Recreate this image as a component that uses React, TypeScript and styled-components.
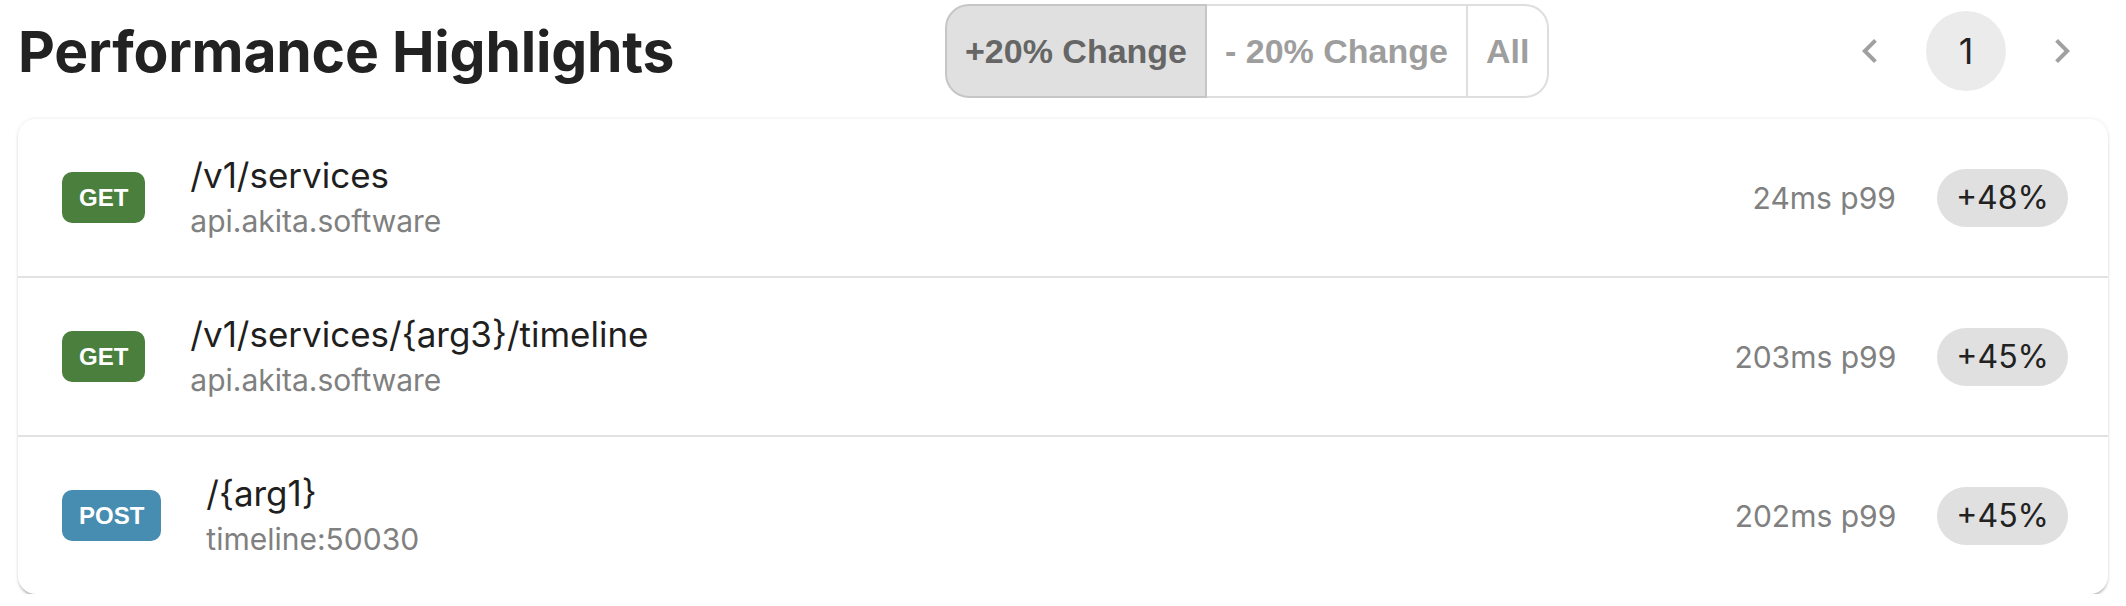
import React from 'react'
import styled, { createGlobalStyle } from 'styled-components'

const GlobalStyle = createGlobalStyle`
  body {
    margin: 0;
    background: #ffffff;
    font-family: Inter, "Noto Sans", sans-serif;
  }
`

const Page = styled.div`
  padding: 0 18px;
`

// Title | filter toggle | pager
const Header = styled.div`
  align-items: center;
  display: grid;
  grid-template-columns: 927px auto 1fr;
  height: 102px;
  margin-bottom: 17px;
`

const Title = styled.h1`
  color: #222222;
  font-size: 57px;
  font-weight: 700;
  letter-spacing: -0.2px;
  margin: 0 0 0 0;
`

const Toggle = styled.div`
  display: flex;
  height: 94px;
`

const ToggleButton = styled.button<{ $selected?: boolean }>`
  background: ${({ $selected }) => ($selected ? '#e0e0e0' : '#ffffff')};
  border: 2px solid ${({ $selected }) => ($selected ? '#c6c6c6' : '#dedede')};
  color: ${({ $selected }) => ($selected ? '#666666' : '#9e9e9e')};
  cursor: pointer;
  font-family: "Liberation Sans", Arial, sans-serif;
  font-size: 34px;
  font-weight: 700;
  padding: 0 18px;

  & + & {
    border-left: none;
  }

  &:first-child {
    border-radius: 24px 0 0 24px;
  }

  &:last-child {
    border-radius: 0 24px 24px 0;
  }
`

const Pager = styled.div`
  align-items: center;
  display: flex;
  gap: 16px;
  justify-self: end;
  margin-right: 6px;
`

const PagerArrow = styled.button`
  align-items: center;
  background: none;
  border: none;
  color: #a0a0a0;
  display: flex;
  height: 80px;
  justify-content: center;
  padding: 0;
  width: 80px;
`

const PagerNumber = styled.button`
  background: #ebebeb;
  border: none;
  border-radius: 50%;
  color: #222222;
  font-family: Inter, sans-serif;
  font-size: 36px;
  height: 80px;
  padding: 0;
  width: 80px;
`

const Card = styled.div`
  background: #ffffff;
  border-radius: 18px;
  box-shadow: 0 3px 3px -1px rgba(0, 0, 0, 0.28), 0 0 4px rgba(0, 0, 0, 0.09);
  overflow: hidden;
`

const Row = styled.div`
  align-items: center;
  display: flex;
  height: 157px;
  padding: 0 40px 0 44px;

  & + & {
    border-top: 2px solid #e2e2e2;
  }
`

const methodColours: Record<string, string> = {
  GET: '#4b7f3d',
  POST: '#478db1',
}

const MethodBadge = styled.span<{ $method: string }>`
  align-items: center;
  background: ${({ $method }) => methodColours[$method]};
  border-radius: 10px;
  color: #ffffff;
  display: flex;
  font-family: "Liberation Sans", Arial, sans-serif;
  font-size: 24px;
  font-weight: 700;
  height: 51px;
  padding: 0 17px;
`

const Endpoint = styled.div`
  flex: 1;
  margin-left: 45px;
`

const EndpointPath = styled.div`
  color: #1f1f1f;
  font-size: 35px;
  line-height: 40px;
`

const EndpointHost = styled.div`
  color: #808080;
  font-size: 30px;
  line-height: 40px;
  margin-top: 6px;
`

const Latency = styled.span`
  color: #808080;
  font-size: 30px;
  margin-right: 41px;
`

const ChangePill = styled.span`
  align-items: center;
  background: #e0e0e0;
  border-radius: 29px;
  color: #222222;
  display: flex;
  font-size: 32px;
  height: 58px;
  padding: 0 19px;
`

const Chevron = ({ flip }: { flip?: boolean }) => (
  <svg width="48" height="48" viewBox="0 0 24 24" fill="currentColor" style={flip ? { transform: 'scaleX(-1)' } : undefined}>
    <path d="M15.41 7.41 14 6l-6 6 6 6 1.41-1.41L10.83 12z" />
  </svg>
)

interface Highlight {
  method: string
  path: string
  host: string
  latency: string
  change: string
}

const highlights: Highlight[] = [
  { method: 'GET', path: '/v1/services', host: 'api.akita.software', latency: '24ms p99', change: '+48%' },
  { method: 'GET', path: '/v1/services/{arg3}/timeline', host: 'api.akita.software', latency: '203ms p99', change: '+45%' },
  { method: 'POST', path: '/{arg1}', host: 'timeline:50030', latency: '202ms p99', change: '+45%' },
]

export default function App() {
  return (
    <Page>
      <GlobalStyle />
      <Header>
        <Title>Performance Highlights</Title>
        <Toggle>
          <ToggleButton $selected>+20% Change</ToggleButton>
          <ToggleButton>- 20% Change</ToggleButton>
          <ToggleButton>All</ToggleButton>
        </Toggle>
        <Pager>
          <PagerArrow>
            <Chevron />
          </PagerArrow>
          <PagerNumber>1</PagerNumber>
          <PagerArrow>
            <Chevron flip />
          </PagerArrow>
        </Pager>
      </Header>
      <Card>
        {highlights.map((h) => (
          <Row key={h.path}>
            <MethodBadge $method={h.method}>{h.method}</MethodBadge>
            <Endpoint>
              <EndpointPath>{h.path}</EndpointPath>
              <EndpointHost>{h.host}</EndpointHost>
            </Endpoint>
            <Latency>{h.latency}</Latency>
            <ChangePill>{h.change}</ChangePill>
          </Row>
        ))}
      </Card>
    </Page>
  )
}
